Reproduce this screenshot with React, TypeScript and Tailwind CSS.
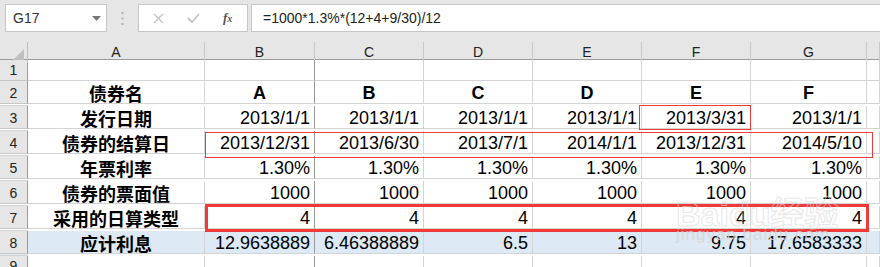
import React from 'react';

const cols = ['A', 'B', 'C', 'D', 'E', 'F', 'G', ''];

type Row = { n: number; label?: string; vals?: string[]; kind?: 'head' | 'num'; blue?: boolean };

const rows: Row[] = [
  { n: 1 },
  { n: 2, label: '债券名', vals: ['A', 'B', 'C', 'D', 'E', 'F'], kind: 'head' },
  { n: 3, label: '发行日期', vals: ['2013/1/1', '2013/1/1', '2013/1/1', '2013/1/1', '2013/3/31', '2013/1/1'] },
  { n: 4, label: '债券的结算日', vals: ['2013/12/31', '2013/6/30', '2013/7/1', '2014/1/1', '2013/12/31', '2014/5/10'] },
  { n: 5, label: '年票利率', vals: ['1.30%', '1.30%', '1.30%', '1.30%', '1.30%', '1.30%'] },
  { n: 6, label: '债券的票面值', vals: ['1000', '1000', '1000', '1000', '1000', '1000'] },
  { n: 7, label: '采用的日算类型', vals: ['4', '4', '4', '4', '4', '4'] },
  { n: 8, label: '应计利息', vals: ['12.9638889', '6.46388889', '6.5', '13', '9.75', '17.6583333'], blue: true },
  { n: 9 },
];

const gridCols = 'grid grid-cols-[28px_177px_110px_109px_109px_109px_109px_116px_1fr]';
const num = { fontFamily: '"Liberation Sans", Arial, sans-serif' };
const cjk = { fontFamily: '"Noto Sans CJK SC", "Liberation Sans", sans-serif' };

function FormulaBar() {
  return (
    <div className="h-[42px] bg-[#e6e6e6] relative flex items-start pt-[4px] pl-[5px]">
      <div className="w-[102px] h-[28px] bg-white border border-[#c6c6c6] flex items-center justify-between pl-[7px] pr-[5px]">
        <span className="text-[14px] text-[#333]" style={num}>G17</span>
        <svg width="9" height="5" viewBox="0 0 9 5"><path d="M0 0h9L4.5 5z" fill="#777" /></svg>
      </div>
      <div className="w-[31px] h-[28px] flex items-center justify-center">
        <svg width="3" height="13" viewBox="0 0 3 13">
          <rect x="0.5" y="0" width="2" height="2" fill="#b0b0b0" />
          <rect x="0.5" y="5.5" width="2" height="2" fill="#b0b0b0" />
          <rect x="0.5" y="11" width="2" height="2" fill="#b0b0b0" />
        </svg>
      </div>
      <div className="w-[110px] h-[28px] bg-white border border-[#c6c6c6] flex items-center pl-[14px]">
        <svg width="11" height="11" viewBox="0 0 11 11"><path d="M1 1l9 9M10 1l-9 9" stroke="#c4c4c4" strokeWidth="1.3" /></svg>
        <svg className="ml-[23px]" width="13" height="10" viewBox="0 0 13 10"><path d="M1 5l4 4 7-8" stroke="#c4c4c4" strokeWidth="1.8" fill="none" /></svg>
        <span className="ml-[23px] text-[13px] italic text-[#555] font-bold" style={{ fontFamily: '"Liberation Serif", serif' }}>f<span className="text-[10px]">x</span></span>
      </div>
      <div className="ml-[3px] flex-1 h-[28px] bg-white border border-[#c6c6c6] border-r-0 flex items-center pl-[11px]">
        <span className="text-[14px] text-[#222]" style={num}>=1000*1.3%*(12+4+9/30)/12</span>
      </div>
    </div>
  );
}

function HeaderRow() {
  return (
    <div className={`${gridCols} h-[18px] bg-[#e6e6e6] border-b border-[#9b9b9b]`}>
      <div className="border-r border-[#bcbcbc] relative">
        <svg className="absolute right-[3px] bottom-[3px]" width="11" height="11" viewBox="0 0 11 11"><path d="M11 0v11H0z" fill="#bfbfbf" /></svg>
      </div>
      {cols.map((c, i) => (
        <div key={i} className="border-r border-[#c8c8c8] flex items-center justify-center text-[14px] text-[#222]" style={num}>
          {c}
        </div>
      ))}
    </div>
  );
}

function SheetRow({ row }: { row: Row }) {
  const h = row.n === 1 ? 'h-[21px]' : row.n === 9 ? 'h-[10px]' : 'h-[25px]';
  const bg = row.blue ? 'bg-[#dde9f5]' : 'bg-white';
  return (
    <div className={`${gridCols} ${h}`}>
      <div className="bg-[#e6e6e6] border-r border-[#9b9b9b] border-b border-b-[#c8c8c8] flex items-end justify-center text-[14px] text-[#222] leading-[20px]" style={num}>
        {row.n}
      </div>
      <div className={`${bg} border-r border-b border-[#d4d4d4] flex items-end justify-center`}>
        {row.label && (
          <span className="text-[18px] font-bold text-black leading-[20px]" style={cjk}>{row.label}</span>
        )}
      </div>
      {Array.from({ length: 6 }).map((_, i) => (
        <div
          key={i}
          className={`${bg} border-b border-[#d4d4d4] flex items-end ${row.kind === 'head' ? 'justify-center' : 'justify-end pr-[4px]'} ${i === 0 ? 'border-r border-r-[#9b9b9b]' : 'border-r'}`}
        >
          {row.vals && (
            <span className={`text-[18px] text-black leading-[20px] ${row.kind === 'head' ? 'font-bold' : ''}`} style={num}>
              {row.vals[i]}
            </span>
          )}
        </div>
      ))}
      <div className={`${bg} border-r border-b border-[#d4d4d4]`} />
      <div className={`${bg} border-b border-[#d4d4d4]`} />
    </div>
  );
}

export default function App() {
  return (
    <div className="w-[880px] h-[267px] overflow-hidden bg-white relative">
      <FormulaBar />
      <HeaderRow />
      <div>
        {rows.map((r) => (
          <SheetRow key={r.n} row={r} />
        ))}
      </div>

      {/* red highlight boxes */}
      <div className="absolute left-[639px] top-[105px] w-[112px] h-[25px] border border-[#f03a3a]" />
      <div className="absolute left-[205px] top-[132px] w-[668px] h-[26px] border border-[#f03a3a]" />
      <div className="absolute left-[205px] top-[204px] w-[664px] h-[28px] border-[3px] border-[#f03a3a]" />

      {/* watermark */}
      <div className="absolute left-[676px] top-[186px] text-[34px] font-bold text-transparent opacity-60 pointer-events-none" style={{ ...num, WebkitTextStroke: '1px #d8d8d8' }}>
        Baidu<span style={cjk}>经验</span>
      </div>
      <div className="absolute left-[676px] top-[222px] text-[17px] text-[#d6d6d6] opacity-80 pointer-events-none tracking-[1px]" style={num}>
        jingyan.baidu.com
      </div>
    </div>
  );
}
